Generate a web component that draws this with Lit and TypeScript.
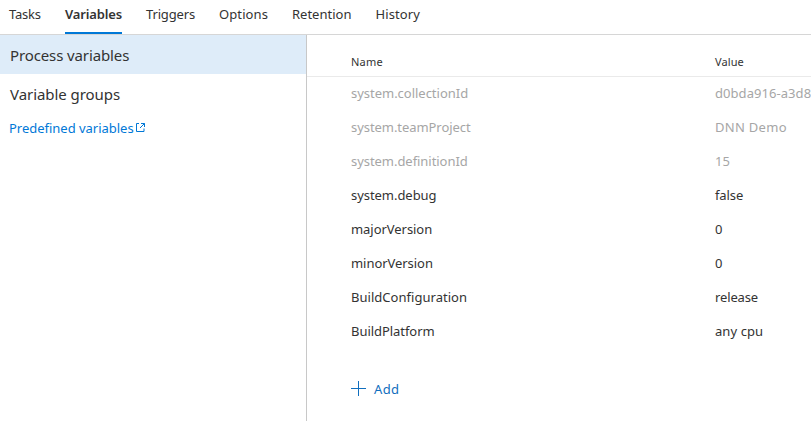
import { LitElement, html, css } from "lit";
import { customElement } from "lit/decorators.js";
import { classMap } from "lit/directives/class-map.js";
import { styleMap } from "lit/directives/style-map.js";

interface Label { text: string; track?: number }
interface Tab extends Label { width: number; active?: boolean }
interface Variable { name: Label; value: Label; system?: boolean }

const TABS: Tab[] = [
  { text: "Tasks", width: 32, track: -0.2 },
  { text: "Variables", width: 57, track: -0.14, active: true },
  { text: "Triggers", width: 49, track: -0.15 },
  { text: "Options", width: 49, track: 0.1 },
  { text: "Retention", width: 59.5 },
  { text: "History", width: 45, track: 0.1 },
];

const VARIABLES: Variable[] = [
  { name: { text: "system.collectionId", track: -0.02 }, value: { text: "d0bda916-a3d8", track: 0.06 }, system: true },
  { name: { text: "system.teamProject", track: -0.06 }, value: { text: "DNN Demo", track: 0.3 }, system: true },
  { name: { text: "system.definitionId", track: -0.05 }, value: { text: "15" }, system: true },
  { name: { text: "system.debug", track: -0.05 }, value: { text: "false", track: -0.1 } },
  { name: { text: "majorVersion", track: -0.05 }, value: { text: "0" } },
  { name: { text: "minorVersion", track: -0.05 }, value: { text: "0" } },
  { name: { text: "BuildConfiguration", track: 0.03 }, value: { text: "release", track: -0.13 } },
  { name: { text: "BuildPlatform", track: -0.05 }, value: { text: "any cpu", track: 0.08 } },
];

const label = ({ text, track = 0 }: Label) =>
  html`<span style=${styleMap({ letterSpacing: `${track}px` })}>${text}</span>`;

@customElement("app-root")
export class AppRoot extends LitElement {
  static styles = css`
    :host {
      display: flex;
      flex-direction: column;
      height: 421px;
      overflow: hidden;
      box-sizing: border-box;
      background: #fff;
      color: #333;
      font: 13px/18px "Noto Sans", "Open Sans", sans-serif;
      white-space: nowrap;
    }
    * { box-sizing: border-box; }
    nav {
      display: flex;
      gap: 24px;
      flex: none;
      height: 35px;
      padding-left: 9px;
      border-bottom: 1px solid #d6d6d6;
    }
    .tab { height: 34px; padding-top: 5px; }
    .tab.active { font-weight: 600; border-bottom: 2px solid #0078d7; }
    .body { display: flex; flex: 1; min-height: 0; }
    aside { flex: none; width: 307px; border-right: 1px solid #c8c8c8; }
    .item {
      height: 39px;
      padding-left: 10px;
      font-size: 15px;
      line-height: 41px;
    }
    .item.selected { background: #deecf9; }
    .link {
      display: flex;
      align-items: center;
      gap: 2px;
      height: 30px;
      padding-left: 9px;
      color: #0078d7;
    }
    .link svg { margin-bottom: 1px; }
    main { flex: 1; min-width: 0; overflow: hidden; }
    .row {
      display: grid;
      grid-template-columns: 364px 1fr;
      height: 34px;
      padding-left: 44px;
      line-height: 33px;
    }
    .row.system { color: #a6a6a6; }
    .row.head {
      height: 42px;
      font-size: 11px;
      line-height: 54px;
      border-bottom: 1px solid #eaeaea;
    }
    .add {
      display: flex;
      align-items: center;
      gap: 8px;
      height: 34px;
      margin-top: 23px;
      padding-left: 44px;
      color: #106ebe;
    }
    .add svg { margin-bottom: 2px; }
    svg { display: block; flex: none; fill: none; stroke: currentColor; }
  `;

  render() {
    return html`
      <nav>
        ${TABS.map((tab) => html`
          <div class=${classMap({ tab: true, active: !!tab.active })}
            style=${styleMap({ width: `${tab.width}px` })}>${label(tab)}</div>`)}
      </nav>
      <div class="body">
        <aside>
          <div class="item selected">${label({ text: "Process variables", track: -0.12 })}</div>
          <div class="item">${label({ text: "Variable groups", track: -0.06 })}</div>
          <div class="link">
            ${label({ text: "Predefined variables", track: -0.02 })}
            <svg width="9" height="9" viewBox="0 0 9 9">
              <path d="M3 .5H.5v8h7.5V5.5M5 .5h3.5V4M8.5 .5L4 5" />
            </svg>
          </div>
        </aside>
        <main>
          <div class="row head">${label({ text: "Name", track: 0.2 })}${label({ text: "Value", track: 0.1 })}</div>
          ${VARIABLES.map((v) => html`
            <div class=${classMap({ row: true, system: !!v.system })}>${label(v.name)}${label(v.value)}</div>`)}
          <div class="add">
            <svg width="15" height="15" viewBox="0 0 15 15"><path d="M7.5 0v15M0 7.5h15" /></svg>
            ${label({ text: "Add", track: 0.4 })}
          </div>
        </main>
      </div>
    `;
  }
}
